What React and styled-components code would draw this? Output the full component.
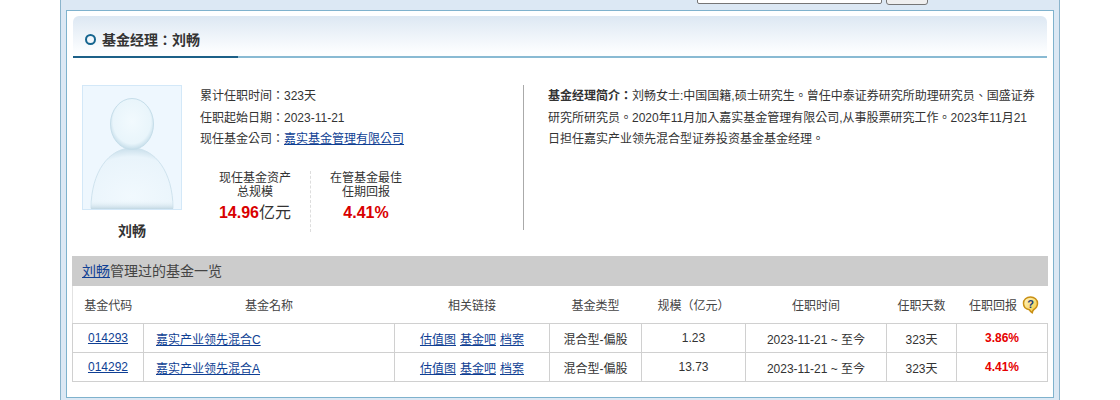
import React from 'react'
import styled, { createGlobalStyle } from 'styled-components'

const GlobalStyle = createGlobalStyle`
  html, body {
    margin: 0;
    padding: 0;
    height: 400px;
    overflow: hidden;
    background: #fff;
    font-family: "Liberation Sans", "Noto Sans CJK TC", sans-serif;
    font-size: 12px;
    color: #333;
  }
  a {
    color: #0f3f94;
    text-decoration: underline;
  }
`

const Page = styled.div`
  box-sizing: border-box;
  width: 1000px;
  height: 400px;
  margin-left: 60px;
  padding: 0 5px;
  background: #dce8f4;
  border-left: 1px solid #8bb4cc;
  border-right: 1px solid #8bb4cc;
`

const SearchRow = styled.div`
  height: 10px;
  display: flex;
  justify-content: flex-end;
  align-items: flex-end;
  gap: 4px;
  padding-right: 126px;
  overflow: hidden;
`

const SearchInput = styled.div`
  box-sizing: border-box;
  flex: none;
  width: 185px;
  height: 20px;
  margin-bottom: 6px;
  background: #fff;
  border: 1px solid #767676;
  border-radius: 2px;
`

const SearchButton = styled.div`
  box-sizing: border-box;
  flex: none;
  width: 42px;
  height: 20px;
  margin-bottom: 5px;
  background: #efefef;
  border: 1px solid #767676;
  border-radius: 3px;
`

const Panel = styled.div`
  box-sizing: border-box;
  width: 988px;
  height: 388px;
  padding: 5px 5px 0 6px;
  background: #fff;
  border: 1px solid #7fb2cd;
`

const PanelHead = styled.div`
  display: flex;
  align-items: center;
  gap: 6px;
  box-sizing: border-box;
  width: 974px;
  height: 42px;
  padding: 6px 0 0 12px;
  border-radius: 6px 6px 0 0;
  border-bottom: 2px solid #89bad3;
  background: linear-gradient(#dde8f3, #fdfeff 92%);
  position: relative;

  &::after {
    content: '';
    position: absolute;
    left: 0;
    bottom: -2px;
    width: 165px;
    height: 2px;
    background: #1c6088;
  }
`

const Ring = styled.span`
  box-sizing: border-box;
  width: 11px;
  height: 11px;
  border: 2px solid #15658f;
  border-radius: 50%;
`

const PanelTitle = styled.h3`
  margin: 0;
  font-size: 14px;
  font-weight: bold;
  color: #333;
`

const Profile = styled.div`
  display: flex;
  height: 198px;
  padding: 27px 0 0 9px;
  box-sizing: border-box;
`

const PhotoCol = styled.div`
  flex: none;
  width: 100px;
  text-align: center;
`

const Photo = styled.div`
  box-sizing: border-box;
  width: 100px;
  height: 125px;
  border: 1px solid #d3e8f8;
  background: #eef7fe;
  overflow: hidden;

  svg {
    display: block;
  }
`

const PersonName = styled.div`
  margin-top: 12px;
  font-size: 14px;
  line-height: 18px;
  font-weight: bold;
`

const InfoCol = styled.div`
  flex: none;
  width: 341px;
  padding: 1px 0 0 18px;
  box-sizing: border-box;
`

const InfoLine = styled.div`
  line-height: 21.5px;
  height: 21.5px;
`

const Stats = styled.div`
  display: flex;
  margin-top: 20.5px;
`

const Stat = styled.div`
  box-sizing: border-box;
  width: ${p => p.$w}px;
  height: 61px;
  text-align: center;
  border-right: ${p => (p.$sep ? '1px dashed #ddd' : 'none')};
`

const StatLabel = styled.div`
  line-height: 14px;
`

const StatValue = styled.div`
  margin-top: 4px;
  font-size: 16px;
  line-height: 20px;
  color: #333;

  b {
    color: #d90000;
  }
`

const Bio = styled.div`
  flex: none;
  box-sizing: border-box;
  width: 517px;
  height: 145px;
  padding: 1px 3px 0 24px;
  border-left: 1px solid #aaa;
  line-height: 21.5px;
`

const ListBar = styled.div`
  width: 976px;
  height: 30px;
  margin-left: -1px;
  padding-left: 10px;
  box-sizing: border-box;
  background: #cccccc;
  font-size: 14px;
  line-height: 30px;
  color: #444;
`

const Table = styled.table`
  width: 975px;
  margin-left: -1px;
  border-collapse: collapse;
  table-layout: fixed;
`

const Th = styled.th`
  height: 37px;
  padding: 0;
  font-weight: normal;
  font-size: 12px;
  color: #444;
  text-align: center;
  border-left: ${p => (p.$edge ? '1px solid #e2e2e2' : 'none')};
  border-bottom: 1px solid #d0d0d0;
`

const Td = styled.td`
  height: 28px;
  padding: ${p => (p.$left ? '0 0 0 12px' : '0')};
  text-align: ${p => (p.$left ? 'left' : 'center')};
  border: 1px solid #d0d0d0;
`

const Links = styled.span`
  display: inline-flex;
  gap: 4px;
`

const Rise = styled.b`
  color: #e60000;
`

const ReturnHead = styled.span`
  display: inline-flex;
  align-items: center;
  gap: 5px;
  padding-left: 4px;
`

const Help = () => (
  <svg width="17" height="18" viewBox="0 0 17 18">
    <defs>
      <linearGradient id="help" x1="0" y1="0" x2="1" y2="1">
        <stop offset="0" stopColor="#fff6c8" />
        <stop offset="1" stopColor="#f4c838" />
      </linearGradient>
    </defs>
    <path
      d="M8.5 1C12.500 1 15.500 3.600 15.500 7.300c0 2.800-1.400 5-3.600 6.200-.8.500-1.400 1.600-1.600 3.200-1.300-.6-2.300-1.600-3-3C3.800 13.200 1.500 10.600 1.500 7.300 1.500 3.600 4.500 1 8.500 1z"
      fill="url(#help)"
      stroke="#c98f14"
      strokeWidth="1.500"
    />
    <text x="8.500" y="11.500" textAnchor="middle" fontSize="11" fontWeight="bold" fill="#1b3d78" fontFamily="Liberation Sans">?</text>
  </svg>
)

const Avatar = () => (
  <svg width="98" height="123" viewBox="0 0 98 123">
    <defs>
      <radialGradient id="head" cx="0.5" cy="0.45" r="0.56">
        <stop offset="0" stopColor="#f2fafe" />
        <stop offset="0.78" stopColor="#e9f5fb" />
        <stop offset="1" stopColor="#c2dbe8" />
      </radialGradient>
      <radialGradient id="body" cx="0.5" cy="0.8" r="0.8">
        <stop offset="0" stopColor="#f1f9fe" />
        <stop offset="0.82" stopColor="#e9f4fb" />
        <stop offset="1" stopColor="#c9dfeb" />
      </radialGradient>
      <linearGradient id="base" x1="0" y1="0" x2="0" y2="1">
        <stop offset="0" stopColor="#eef7fc" stopOpacity="0" />
        <stop offset="1" stopColor="#c3d8e3" />
      </linearGradient>
    </defs>
    <path d="M8 122.500C8 86 26 62 49 62s41 24 41 60.500z" fill="url(#body)" stroke="#cfe3ee" strokeWidth="1" />
    <rect x="8" y="114" width="82" height="9" fill="url(#base)" />
    <ellipse cx="49" cy="38" rx="21.500" ry="25.500" fill="url(#head)" stroke="#c6deea" strokeWidth="1" />
  </svg>
)

const funds = [
  { code: '014293', name: '嘉实产业领先混合C', size: '1.23', ret: '3.86%' },
  { code: '014292', name: '嘉实产业领先混合A', size: '13.73', ret: '4.41%' }
]

const headers = ['基金代码', '基金名称', '相关链接', '基金类型', '规模（亿元）', '任职时间', '任职天数']
const colWidths = [71, 251, 155, 92, 104, 141, 70, 91]

const App = () => {
  return (
    <Page>
      <GlobalStyle />
      <SearchRow>
        <SearchInput />
        <SearchButton />
      </SearchRow>
      <Panel>
        <PanelHead>
          <Ring />
          <PanelTitle>基金经理：刘畅</PanelTitle>
        </PanelHead>
        <Profile>
          <PhotoCol>
            <Photo>
              <Avatar />
            </Photo>
            <PersonName>刘畅</PersonName>
          </PhotoCol>
          <InfoCol>
            <InfoLine>累计任职时间：323天</InfoLine>
            <InfoLine>任职起始日期：2023-11-21</InfoLine>
            <InfoLine>
              现任基金公司：<a href="#company">嘉实基金管理有限公司</a>
            </InfoLine>
            <Stats>
              <Stat $w={111} $sep>
                <StatLabel>现任基金资产</StatLabel>
                <StatLabel>总规模</StatLabel>
                <StatValue>
                  <b>14.96</b>亿元
                </StatValue>
              </Stat>
              <Stat $w={110}>
                <StatLabel>在管基金最佳</StatLabel>
                <StatLabel>任期回报</StatLabel>
                <StatValue>
                  <b>4.41%</b>
                </StatValue>
              </Stat>
            </Stats>
          </InfoCol>
          <Bio>
            <b>基金经理简介：</b>刘畅女士:中国国籍,硕士研究生。曾任中泰证券研究所助理研究员、国盛证券研究所研究员。2020年11月加入嘉实基金管理有限公司,从事股票研究工作。2023年11月21日担任嘉实产业领先混合型证券投资基金基金经理。
          </Bio>
        </Profile>
        <ListBar>
          <a href="#manager">刘畅</a>管理过的基金一览
        </ListBar>
        <Table>
          <colgroup>
            {colWidths.map((w, i) => (
              <col key={'col' + i} width={w} />
            ))}
          </colgroup>
          <thead>
            <tr>
              {headers.map((h, i) => (
                <Th key={h} $edge={i === 0}>{h}</Th>
              ))}
              <Th>
                <ReturnHead>
                  任职回报
                  <Help />
                </ReturnHead>
              </Th>
            </tr>
          </thead>
          <tbody>
            {funds.map(fund => (
              <tr key={fund.code}>
                <Td><a href="#code">{fund.code}</a></Td>
                <Td $left><a href="#fund">{fund.name}</a></Td>
                <Td>
                  <Links>
                    <a href="#v">估值图</a>
                    <a href="#b">基金吧</a>
                    <a href="#d">档案</a>
                  </Links>
                </Td>
                <Td>混合型-偏股</Td>
                <Td>{fund.size}</Td>
                <Td>2023-11-21 ~ 至今</Td>
                <Td>323天</Td>
                <Td><Rise>{fund.ret}</Rise></Td>
              </tr>
            ))}
          </tbody>
        </Table>
      </Panel>
    </Page>
  )
}

export default App
